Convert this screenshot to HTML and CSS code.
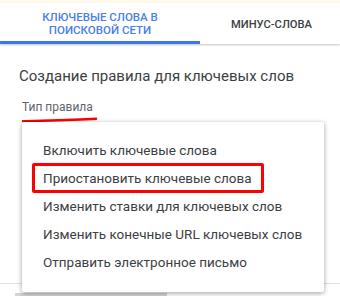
FILE: index.html
```html
<!DOCTYPE html>
<html lang="ru">
<head>
<meta charset="utf-8">
<link rel="stylesheet" href="styles.css">
</head>
<body>
<div class="page">
  <div class="topstrip"></div>
  <div class="tabs">
    <div class="tab active">КЛЮЧЕВЫЕ СЛОВА В<br>ПОИСКОВОЙ СЕТИ</div>
    <div class="tab">МИНУС-СЛОВА</div>
  </div>
  <div class="content">
    <div class="heading">Создание правила для ключевых слов</div>
    <div class="label">Тип правила</div>
  </div>
  <div class="divider"></div>
  <div class="bottombar"></div>

  <svg class="underline" width="76" height="6" viewBox="0 0 76 6">
    <path d="M1 4.2 C 20 3.6, 50 3.2, 74 1.8" stroke="#ff0000" stroke-width="2.6" fill="none" stroke-linecap="round"/>
  </svg>

  <div class="menu">
    <div class="item">Включить ключевые слова</div>
    <div class="item">Приостановить ключевые слова</div>
    <div class="item">Изменить ставки для ключевых слов</div>
    <div class="item">Изменить конечные URL ключевых слов</div>
    <div class="item">Отправить электронное письмо</div>
  </div>
  <div class="highlight"></div>
</div>
</body>
</html>
```
FILE: styles.css
```css
html, body {
  margin: 0;
  padding: 0;
  background: #ffffff;
}
.page {
  position: relative;
  width: 340px;
  height: 296px;
  overflow: hidden;
  font-family: Roboto, "Noto Sans", sans-serif;
  color: #3c4043;
}
.topstrip {
  height: 3px;
  background: #fefbec;
}
.tabs {
  display: flex;
  height: 41px;
  box-shadow: 0 1px 2px rgba(0,0,0,0.25);
  position: relative;
}
.tab {
  display: flex;
  align-items: center;
  justify-content: center;
  text-align: center;
  font-size: 11.5px;
  font-weight: 500;
  line-height: 13px;
  color: #3c4043;
  box-sizing: border-box;
  padding-top: 2px;
}
.tab.active {
  width: 200px;
  color: #4a80e8;
  border-bottom: 3px solid #3b78e7;
  padding-top: 3px;
}
.tab:last-child {
  flex: 1;
  padding-left: 3px;
  font-size: 11.2px;
}
.content {
  padding: 22px 0 0 19px;
}
.heading {
  font-size: 15px;
  line-height: 20px;
  color: #3c4043;
}
.label {
  margin-top: 13px;
  margin-left: 3px;
  font-size: 12px;
  line-height: 16px;
  color: #5f6370;
}
.divider {
  position: absolute;
  left: 0;
  right: 0;
  top: 283px;
  height: 1px;
  background: #e0e0e0;
}
.bottombar {
  position: absolute;
  left: 15px;
  width: 152px;
  top: 293px;
  height: 3px;
  background: #d4d4d4;
}
.underline {
  position: absolute;
  left: 22px;
  top: 117px;
}
.menu {
  position: absolute;
  left: 22px;
  top: 122px;
  width: 302px;
  height: 170px;
  box-sizing: border-box;
  padding: 14px 0 0 21px;
  background: #ffffff;
  box-shadow: 0 1px 4px rgba(0,0,0,0.28), 0 2px 6px rgba(0,0,0,0.12);
  border-radius: 2px;
}
.item {
  height: 28px;
  line-height: 28px;
  font-size: 13.5px;
  color: #3c4043;
  white-space: nowrap;
}
.highlight {
  position: absolute;
  left: 32px;
  top: 163px;
  width: 232px;
  height: 30px;
  box-sizing: border-box;
  border: 3px solid #ff0000;
  border-radius: 2px;
}
```
